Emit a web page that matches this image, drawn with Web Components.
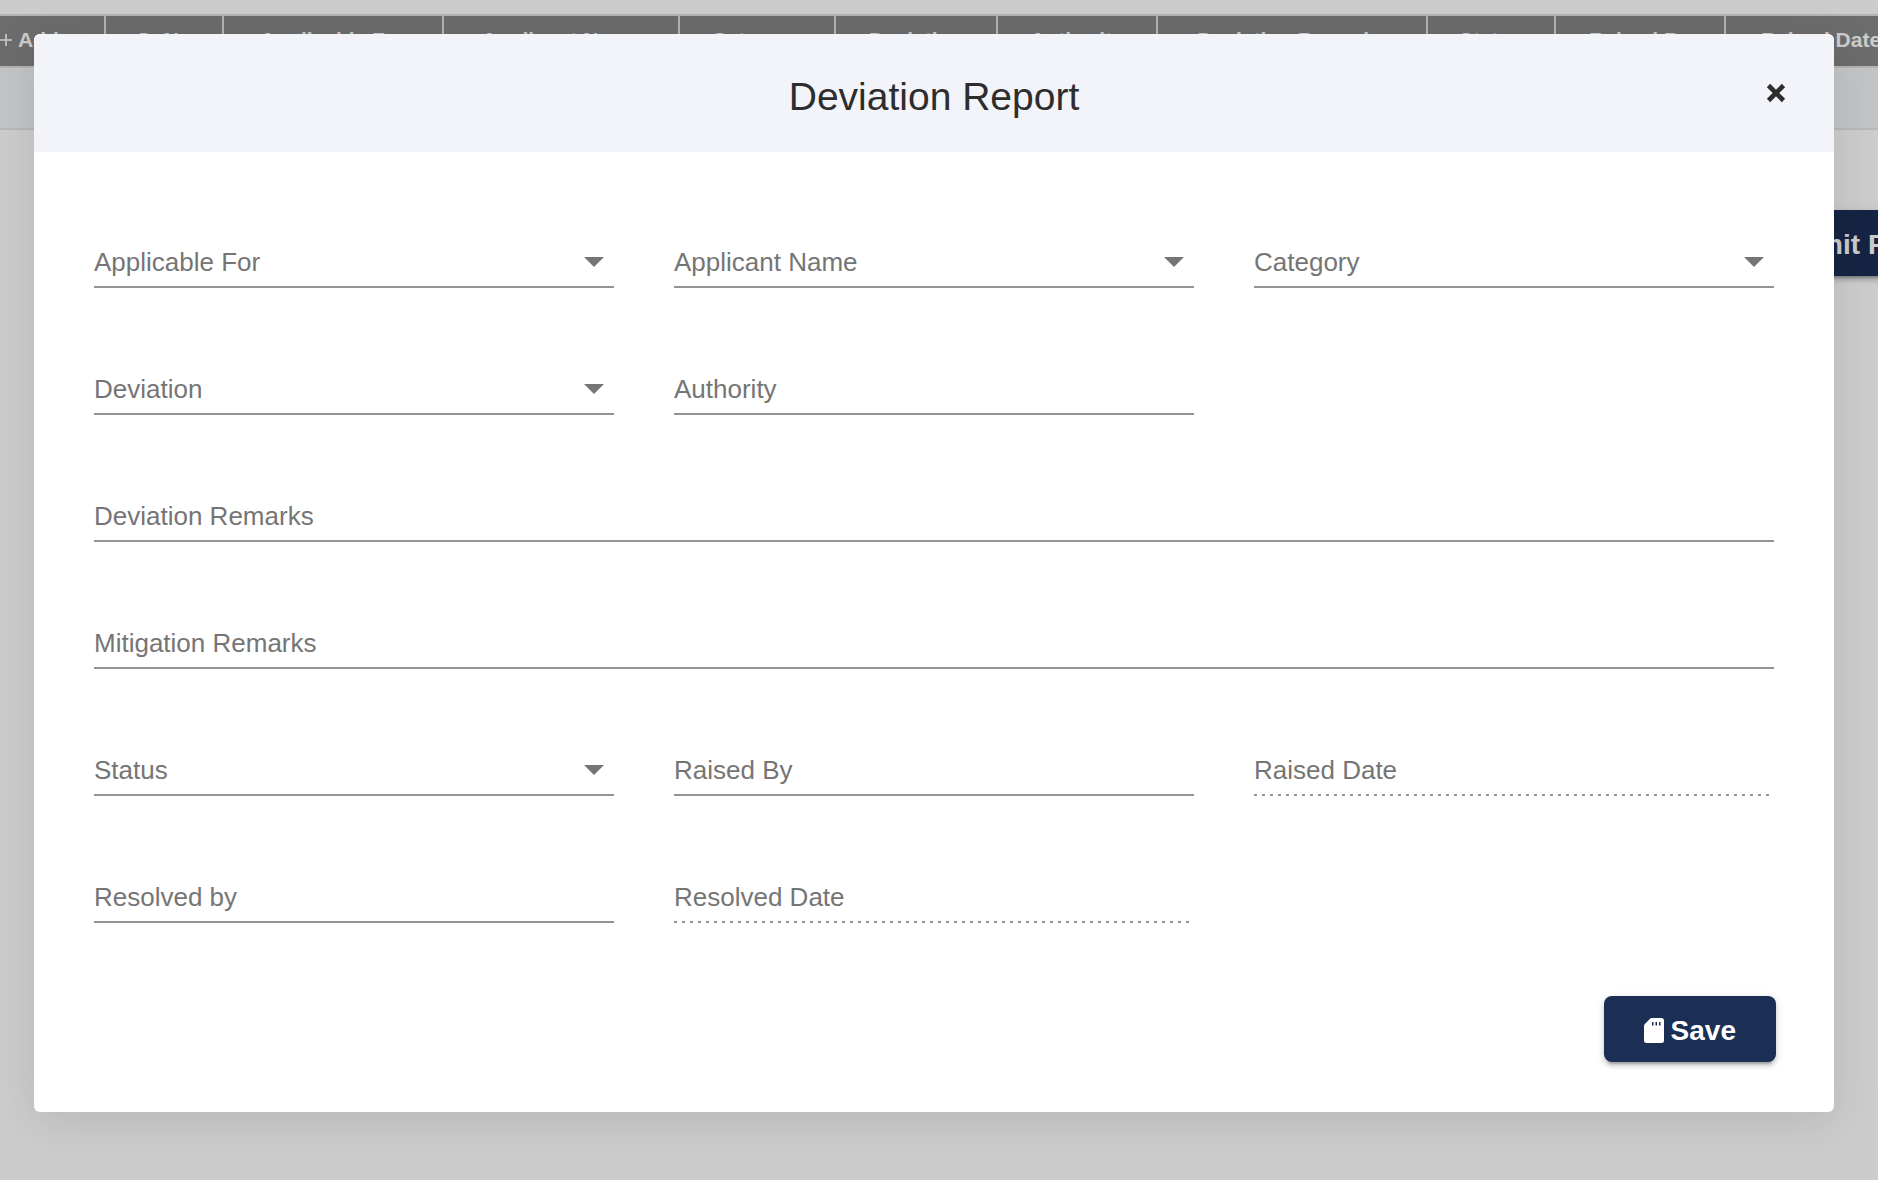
<!DOCTYPE html>
<html lang="en">
<head>
<meta charset="utf-8">
<title>Deviation Report</title>
<style>
  body { margin: 0; font-family: "Liberation Sans", Arial, Helvetica, sans-serif; background: #fff; }
</style>
</head>
<body>
<deviation-page></deviation-page>
<script>
const define = (name, html, setup) => {
  const tpl = document.createElement('template');
  tpl.innerHTML = html;
  customElements.define(name, class extends HTMLElement {
    constructor() {
      super();
      this.attachShadow({ mode: 'open' }).append(tpl.content.cloneNode(true));
    }
    connectedCallback() { if (setup) setup(this, this.shadowRoot); }
  });
};

define('deviation-table', `
  <style>
    :host { display: block; overflow: hidden; }
    table { table-layout: fixed; width: 1918px; border-collapse: separate; border-spacing: 0; border-top: 2px solid #e0e0e0; }
    th { box-sizing: border-box; height: 52px; padding: 0 0 3px; background: #888; color: #fff; font-size: 21px; line-height: 24px;
         border-right: 2px solid #e0e0e0; border-bottom: 2px solid #e0e0e0; white-space: nowrap; }
    td { box-sizing: border-box; height: 62px; padding: 0; background: #f3f5f8; border-bottom: 2px solid #e6e6e6; }
    button { display: flex; align-items: center; gap: 6px; padding: 0; border: 0; background: none; color: inherit; font: inherit; }
    svg { width: 12px; height: 12px; }
  </style>
  <table>
    <colgroup>
      <col style="width:106px"><col style="width:118px"><col style="width:220px"><col style="width:236px">
      <col style="width:156px"><col style="width:162px"><col style="width:160px"><col style="width:270px">
      <col style="width:128px"><col style="width:170px"><col style="width:192px">
    </colgroup>
    <thead><tr>
      <th><button type="button"><svg viewBox="0 0 12 12" aria-hidden="true"><path d="M6 0V12M0 6H12" stroke="currentColor" stroke-width="1.6"/></svg>Add</button></th>
      <th>Sr.No</th><th>Applicable For</th><th>Applicant Name</th><th>Category</th><th>Deviation</th>
      <th>Authority</th><th>Deviation Remarks</th><th>Status</th><th>Raised By</th><th>Raised Date</th>
    </tr></thead>
    <tbody><tr><td colspan="11"></td></tr></tbody>
  </table>
`);

define('action-button', `
  <style>
    :host { display: block; }
    button { display: flex; align-items: center; gap: 7px; height: 66px; padding: 3px 40px 0; border: 0; border-radius: 8px;
      background: #1b2e54; color: #fff; font: bold 28px/40px "Liberation Sans", Arial, sans-serif; white-space: nowrap;
      box-shadow: 0 6px 2px -4px rgba(0,0,0,.2), 0 4px 4px rgba(0,0,0,.14), 0 2px 10px rgba(0,0,0,.12); }
  </style>
  <button type="button"><slot name="icon"></slot><slot></slot></button>
`);

define('form-field', `
  <style>
    :host { display: block; }
    :host([wide]) { grid-column: 1 / -1; }
    .box { position: relative; display: flex; align-items: flex-start; height: 46px; border-bottom: 2px solid #949494; }
    :host([disabled]) .box { border-bottom: 0; padding-bottom: 2px;
      background: repeating-linear-gradient(to right, #949494 0 3px, transparent 3px 8px) left bottom / 100% 2px no-repeat; }
    label { position: absolute; left: 0; top: 7px; font-size: 26px; line-height: 30px; color: #757575; pointer-events: none; white-space: nowrap; }
    input, select { appearance: none; width: 100%; height: 100%; margin: 0; padding: 0; border: 0; outline: 0; background: none;
      font: 26px/30px "Liberation Sans", Arial, sans-serif; color: #222; }
    .arrow { position: absolute; right: 10px; top: 17px; width: 20px; height: 10px; fill: #757575; pointer-events: none; }
  </style>
  <div class="box"></div>
`, (host, root) => {
  const box = root.querySelector('.box');
  if (box.childElementCount) return;
  const select = host.hasAttribute('select');
  const control = document.createElement(select ? 'select' : 'input');
  control.id = 'control';
  control.disabled = host.hasAttribute('disabled');
  const label = document.createElement('label');
  label.htmlFor = 'control';
  label.textContent = host.getAttribute('label');
  box.append(control, label);
  if (select) box.insertAdjacentHTML('beforeend', '<svg class="arrow" viewBox="0 0 20 10" aria-hidden="true"><path d="M0 0H20L10 10Z"/></svg>');
});

define('modal-dialog', `
  <style>
    :host { display: block; background: #fff; border-radius: 6px; box-shadow: 0 10px 46px rgba(0,0,0,.1); }
    header { display: grid; grid-template-columns: 1fr auto 1fr; align-items: center; height: 118px; padding: 0 48px;
      background: #f3f4fa; border-radius: 6px 6px 0 0; box-sizing: border-box; }
    h1 { grid-column: 2; margin: 0; padding-top: 8px; font-size: 39px; line-height: 46px; font-weight: 400; color: #2d2d2d; }
    .close { justify-self: end; padding: 0; border: 0; background: none; color: #2d2d2d; width: 20px; height: 24px; }
    .close svg { display: block; width: 20px; height: 24px; }
    .body { padding: 88px 60px 0; }
    footer { display: flex; justify-content: flex-end; padding: 73px 58px 50px; }
  </style>
  <header>
    <h1><slot name="title"></slot></h1>
    <button class="close" type="button" aria-label="Close"><svg viewBox="0 0 20 24"><path d="M2.500 4.500L17.500 19.500M17.500 4.500L2.500 19.500" stroke="currentColor" stroke-width="4.600"/></svg></button>
  </header>
  <div class="body"><slot></slot></div>
  <footer><slot name="actions"></slot></footer>
`);

define('deviation-page', `
  <style>
    :host { display: block; min-height: 100vh; position: relative; overflow: hidden; }
    .page { padding-top: 14px; }
    .submit { display: flex; justify-content: flex-end; margin-top: 80px; margin-right: -75px; }
    .overlay { position: absolute; inset: 0; padding: 34px 44px 0 34px; background: rgba(0,0,0,.2); }
    form { display: grid; grid-template-columns: repeat(3, minmax(0, 1fr)); gap: 79px 60px; }
    .card { width: 20px; height: 25px; fill: #fff; }
  </style>
  <div class="page">
    <deviation-table></deviation-table>
    <div class="submit"><action-button>Submit For</action-button></div>
  </div>
  <div class="overlay">
    <modal-dialog role="dialog" aria-label="Deviation Report">
      <span slot="title">Deviation Report</span>
      <form>
        <form-field select label="Applicable For"></form-field>
        <form-field select label="Applicant Name"></form-field>
        <form-field select label="Category"></form-field>
        <form-field select label="Deviation"></form-field>
        <form-field label="Authority"></form-field>
        <form-field wide label="Deviation Remarks"></form-field>
        <form-field wide label="Mitigation Remarks"></form-field>
        <form-field select label="Status"></form-field>
        <form-field label="Raised By"></form-field>
        <form-field disabled label="Raised Date"></form-field>
        <form-field label="Resolved by"></form-field>
        <form-field disabled label="Resolved Date"></form-field>
      </form>
      <action-button slot="actions">
        <svg slot="icon" class="card" viewBox="0 0 20 25" aria-hidden="true"><path fill-rule="evenodd" d="M7.500 0H17.500Q20 0 20 2.500V22.500Q20 25 17.500 25H2.500Q0 25 0 22.500V8Q0 7 .7 6.300L6 .7Q6.700 0 7.500 0ZM8 4V7.500H9.500V4ZM11.500 4V7.500H13V4ZM15 4V7.500H16.500V4Z"/></svg>Save</action-button>
    </modal-dialog>
  </div>
`);
</script>
</body>
</html>
